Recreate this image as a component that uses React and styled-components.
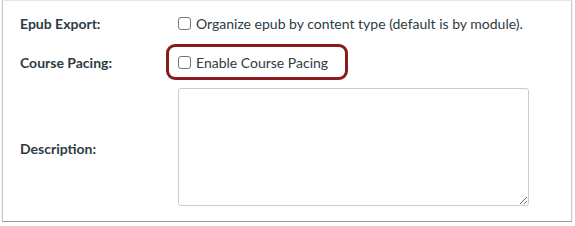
import React from "react";
import styled, { createGlobalStyle } from "styled-components";

const Global = createGlobalStyle`
  html, body { margin: 0; padding: 0; background: #fff; }
  body { font-family: Lato, "Open Sans", sans-serif; }
`;

const Frame = styled.div`
  box-sizing: border-box;
  margin-left: 2px;
  width: 570px;
  height: 222px;
  border: 1px solid #c8c8c8;
  border-top-color: #e6e6e6;
  border-bottom: 1px solid #9a9a9a;
  box-shadow: 0 1px 1px rgba(0, 0, 0, 0.25);
  background: #fff;
  padding: 9px 0 0 17px;
  display: grid;
  grid-template-columns: 158px 1fr;
  align-content: start;
  align-items: center;
`;

const Label = styled.div`
  font-size: 14px;
  font-weight: 700;
  color: #2d3b45;
  height: ${(p) => p.$h}px;
  display: flex;
  align-items: center;
  padding-top: ${(p) => p.$pt || 0}px;
  box-sizing: border-box;
`;

const Field = styled.div`
  height: ${(p) => p.$h}px;
  display: flex;
  align-items: center;
`;

const CheckLabel = styled.label`
  position: relative;
  display: inline-flex;
  align-items: center;
  gap: 5px;
  font-size: 14px;
  color: #2d3b45;
`;

const Box = styled.span`
  box-sizing: border-box;
  width: 13px;
  height: 13px;
  border: 1px solid #767676;
  border-radius: 3px;
  background: #fff;
  flex: none;
`;

const Highlight = styled.span`
  position: absolute;
  left: -12px;
  top: 50%;
  transform: translateY(-50%);
  width: 182px;
  height: 36px;
  box-sizing: border-box;
  border: 3px solid #8b1a1c;
  border-radius: 9px;
  pointer-events: none;
`;

const TextArea = styled.textarea`
  box-sizing: border-box;
  width: 351px;
  height: 118px;
  border: 1px solid #c7cdd1;
  border-radius: 3px;
  margin: 0;
  padding: 6px;
  font-family: inherit;
  resize: both;
  outline: none;
`;

export default function App() {
  return (
    <>
      <Global />
      <Frame>
        <Label $h={26}>Epub Export:</Label>
        <Field $h={26}>
          <CheckLabel>
            <Box />
            Organize epub by content type (default is by module).
          </CheckLabel>
        </Field>

        <Label $h={52}>Course Pacing:</Label>
        <Field $h={52}>
          <CheckLabel>
            <Highlight />
            <Box />
            Enable Course Pacing
          </CheckLabel>
        </Field>

        <Label $h={118} $pt={3}>Description:</Label>
        <Field $h={118}>
          <TextArea aria-label="Description" />
        </Field>
      </Frame>
    </>
  );
}
